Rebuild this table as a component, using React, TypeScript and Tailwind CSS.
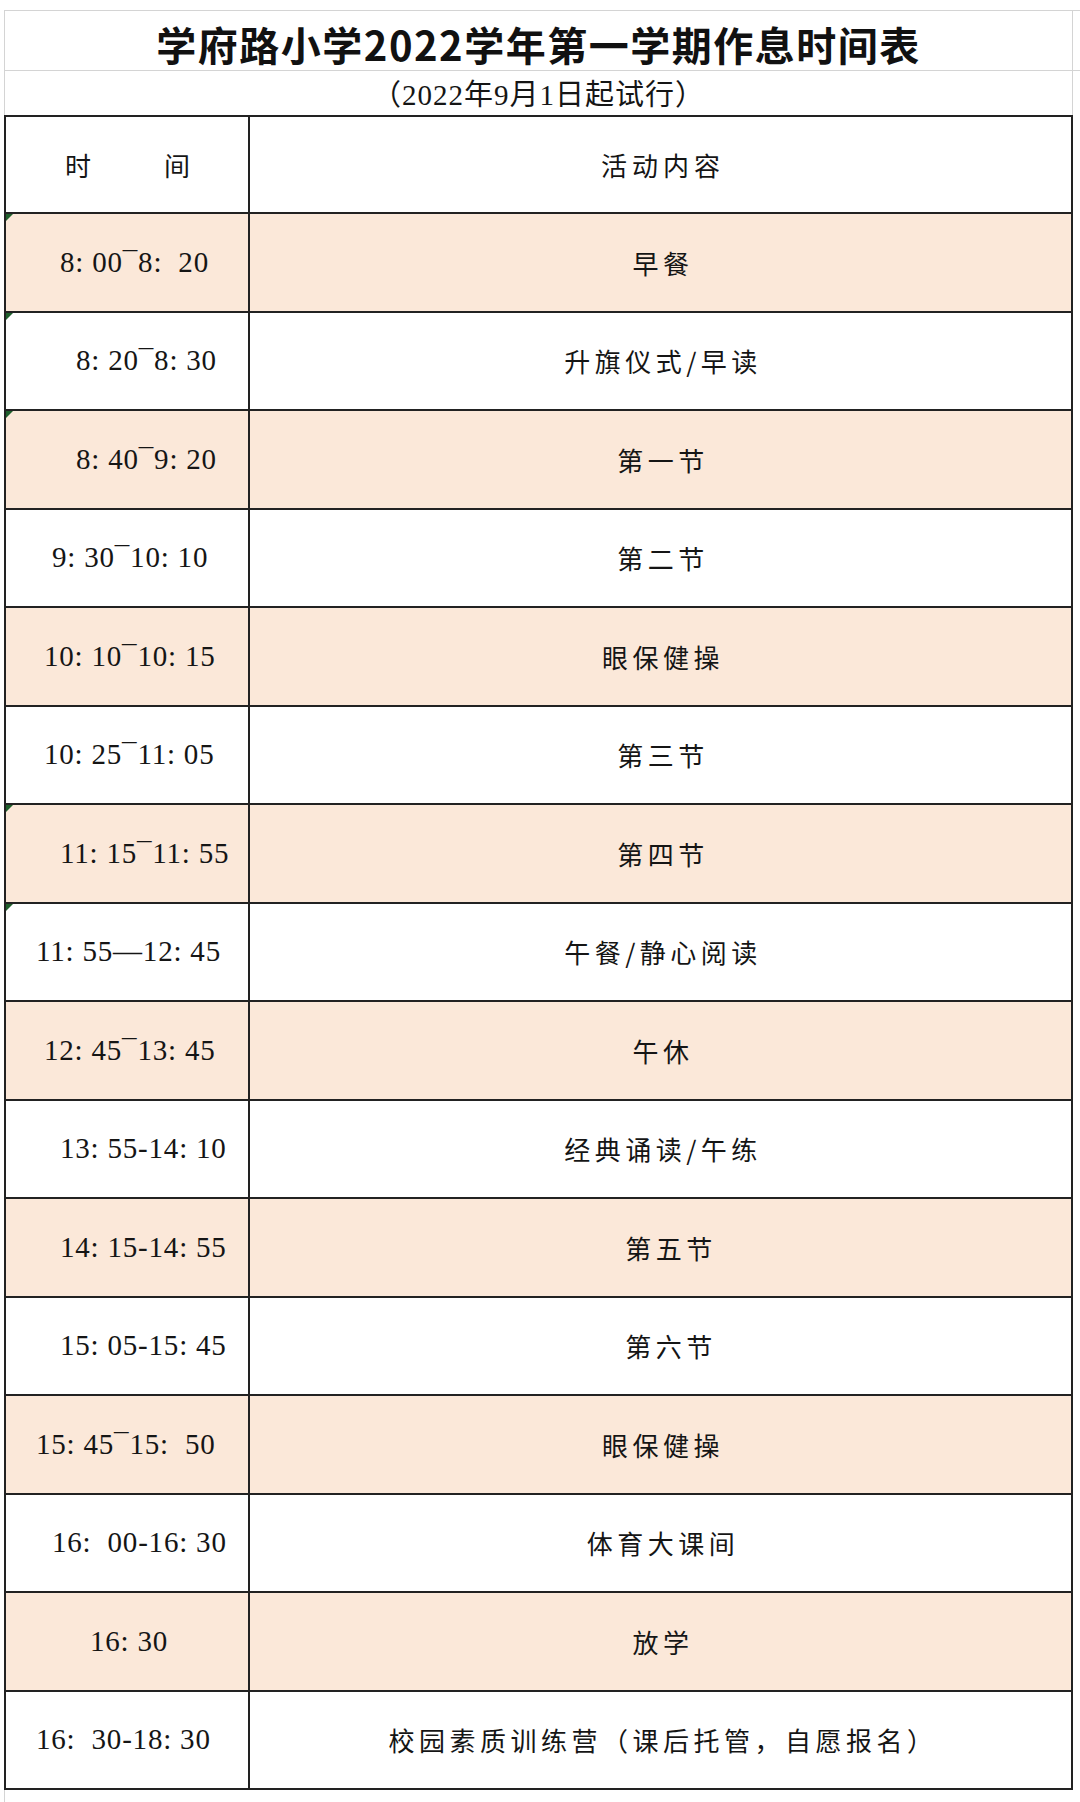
import React from "react";

type Row = {
  time: string;
  pad: string;
  activity: string;
  shift?: string;
  shaded: boolean;
  mark?: boolean;
};

const rows: Row[] = [
  { time: "8: 00¯8:  20", pad: "pl-[54px]", activity: "早餐", shaded: true, mark: true },
  { time: "8: 20¯8: 30", pad: "pl-[70px]", activity: "升旗仪式/早读", shaded: false, mark: true },
  { time: "8: 40¯9: 20", pad: "pl-[70px]", activity: "第一节", shaded: true, mark: true },
  { time: "9: 30¯10: 10", pad: "pl-[46px]", activity: "第二节", shaded: false },
  { time: "10: 10¯10: 15", pad: "pl-[38px]", activity: "眼保健操", shaded: true },
  { time: "10: 25¯11: 05", pad: "pl-[38px]", activity: "第三节", shaded: false },
  { time: "11: 15¯11: 55", pad: "pl-[54px]", activity: "第四节", shaded: true, mark: true },
  { time: "11: 55—12: 45", pad: "pl-[30px]", activity: "午餐/静心阅读", shaded: false, mark: true },
  { time: "12: 45¯13: 45", pad: "pl-[38px]", activity: "午休", shaded: true },
  { time: "13: 55-14: 10", pad: "pl-[54px]", activity: "经典诵读/午练", shaded: false },
  { time: "14: 15-14: 55", pad: "pl-[54px]", activity: "第五节", shift: "pl-[21px]", shaded: true },
  { time: "15: 05-15: 45", pad: "pl-[54px]", activity: "第六节", shift: "pl-[21px]", shaded: false },
  { time: "15: 45¯15:  50", pad: "pl-[30px]", activity: "眼保健操", shaded: true },
  { time: "16:  00-16: 30", pad: "pl-[46px]", activity: "体育大课间", shaded: false },
  { time: "16: 30", pad: "pl-[84px]", activity: "放学", shaded: true },
  { time: "16:  30-18: 30", pad: "pl-[30px]", activity: "校园素质训练营（课后托管，自愿报名）", shaded: false },
];

const cjk = "font-['Noto_Sans_CJK_SC',sans-serif]";

export default function App() {
  return (
    <div className="w-[1080px] h-[1802px] bg-white pt-[10px] overflow-hidden text-[#151515]">
      <div className="ml-[4px] border-t border-[#d4d4d4]">
        <div className="flex h-[60px] border-b border-[#d4d4d4]">
          <div
            className={`w-[1069px] border-l border-r border-[#d4d4d4] flex items-center justify-center pt-[6px] text-[40px] font-bold tracking-[1.5px] leading-none text-[#111] ${cjk}`}
          >
            学府路小学2022学年第一学期作息时间表
          </div>
        </div>
        <div className="flex h-[44px]">
          <div className="w-[1069px] border-l border-r border-[#d4d4d4] flex items-center justify-center pt-[4px] text-[29px] tracking-[1px] leading-none font-['Liberation_Serif','Noto_Sans_CJK_SC',serif]">
            （2022年9月1日起试行）
          </div>
        </div>
      </div>

      <div className="ml-[4px] w-[1069px] border-t-2 border-l-2 border-r-2 border-[#222]">
        <div className="flex h-[97px] border-b-2 border-[#222]">
          <div className={`w-[244px] border-r-2 border-[#222] flex items-center pl-[59px] gap-[73px] text-[26px] ${cjk}`}>
            <span>时</span>
            <span>间</span>
          </div>
          <div className={`flex-1 flex items-center justify-center pl-[5px] text-[26px] tracking-[5px] ${cjk}`}>
            活动内容
          </div>
        </div>

        {rows.map((r, i) => (
          <div
            key={i}
            className={`flex h-[98.5px] border-b-2 border-[#222] ${r.shaded ? "bg-[#fbe8d9]" : "bg-white"}`}
          >
            <div
              className={`relative w-[244px] border-r-2 border-[#222] flex items-center ${r.pad} text-[29px] tracking-[0.8px] whitespace-pre font-['Liberation_Serif',serif]`}
            >
              {r.mark && (
                <span className="absolute top-0 left-0 w-0 h-0 border-t-[7px] border-r-[7px] border-t-[#1f5f2c] border-r-transparent" />
              )}
              {r.time}
            </div>
            <div
              className={`flex-1 flex items-center justify-center ${r.shift ?? "pl-[5px]"} text-[26px] tracking-[4.5px] ${cjk}`}
            >
              {r.activity}
            </div>
          </div>
        ))}
      </div>
      <div className="ml-[4px] h-[20px] border-l border-[#d4d4d4]" />
    </div>
  );
}
